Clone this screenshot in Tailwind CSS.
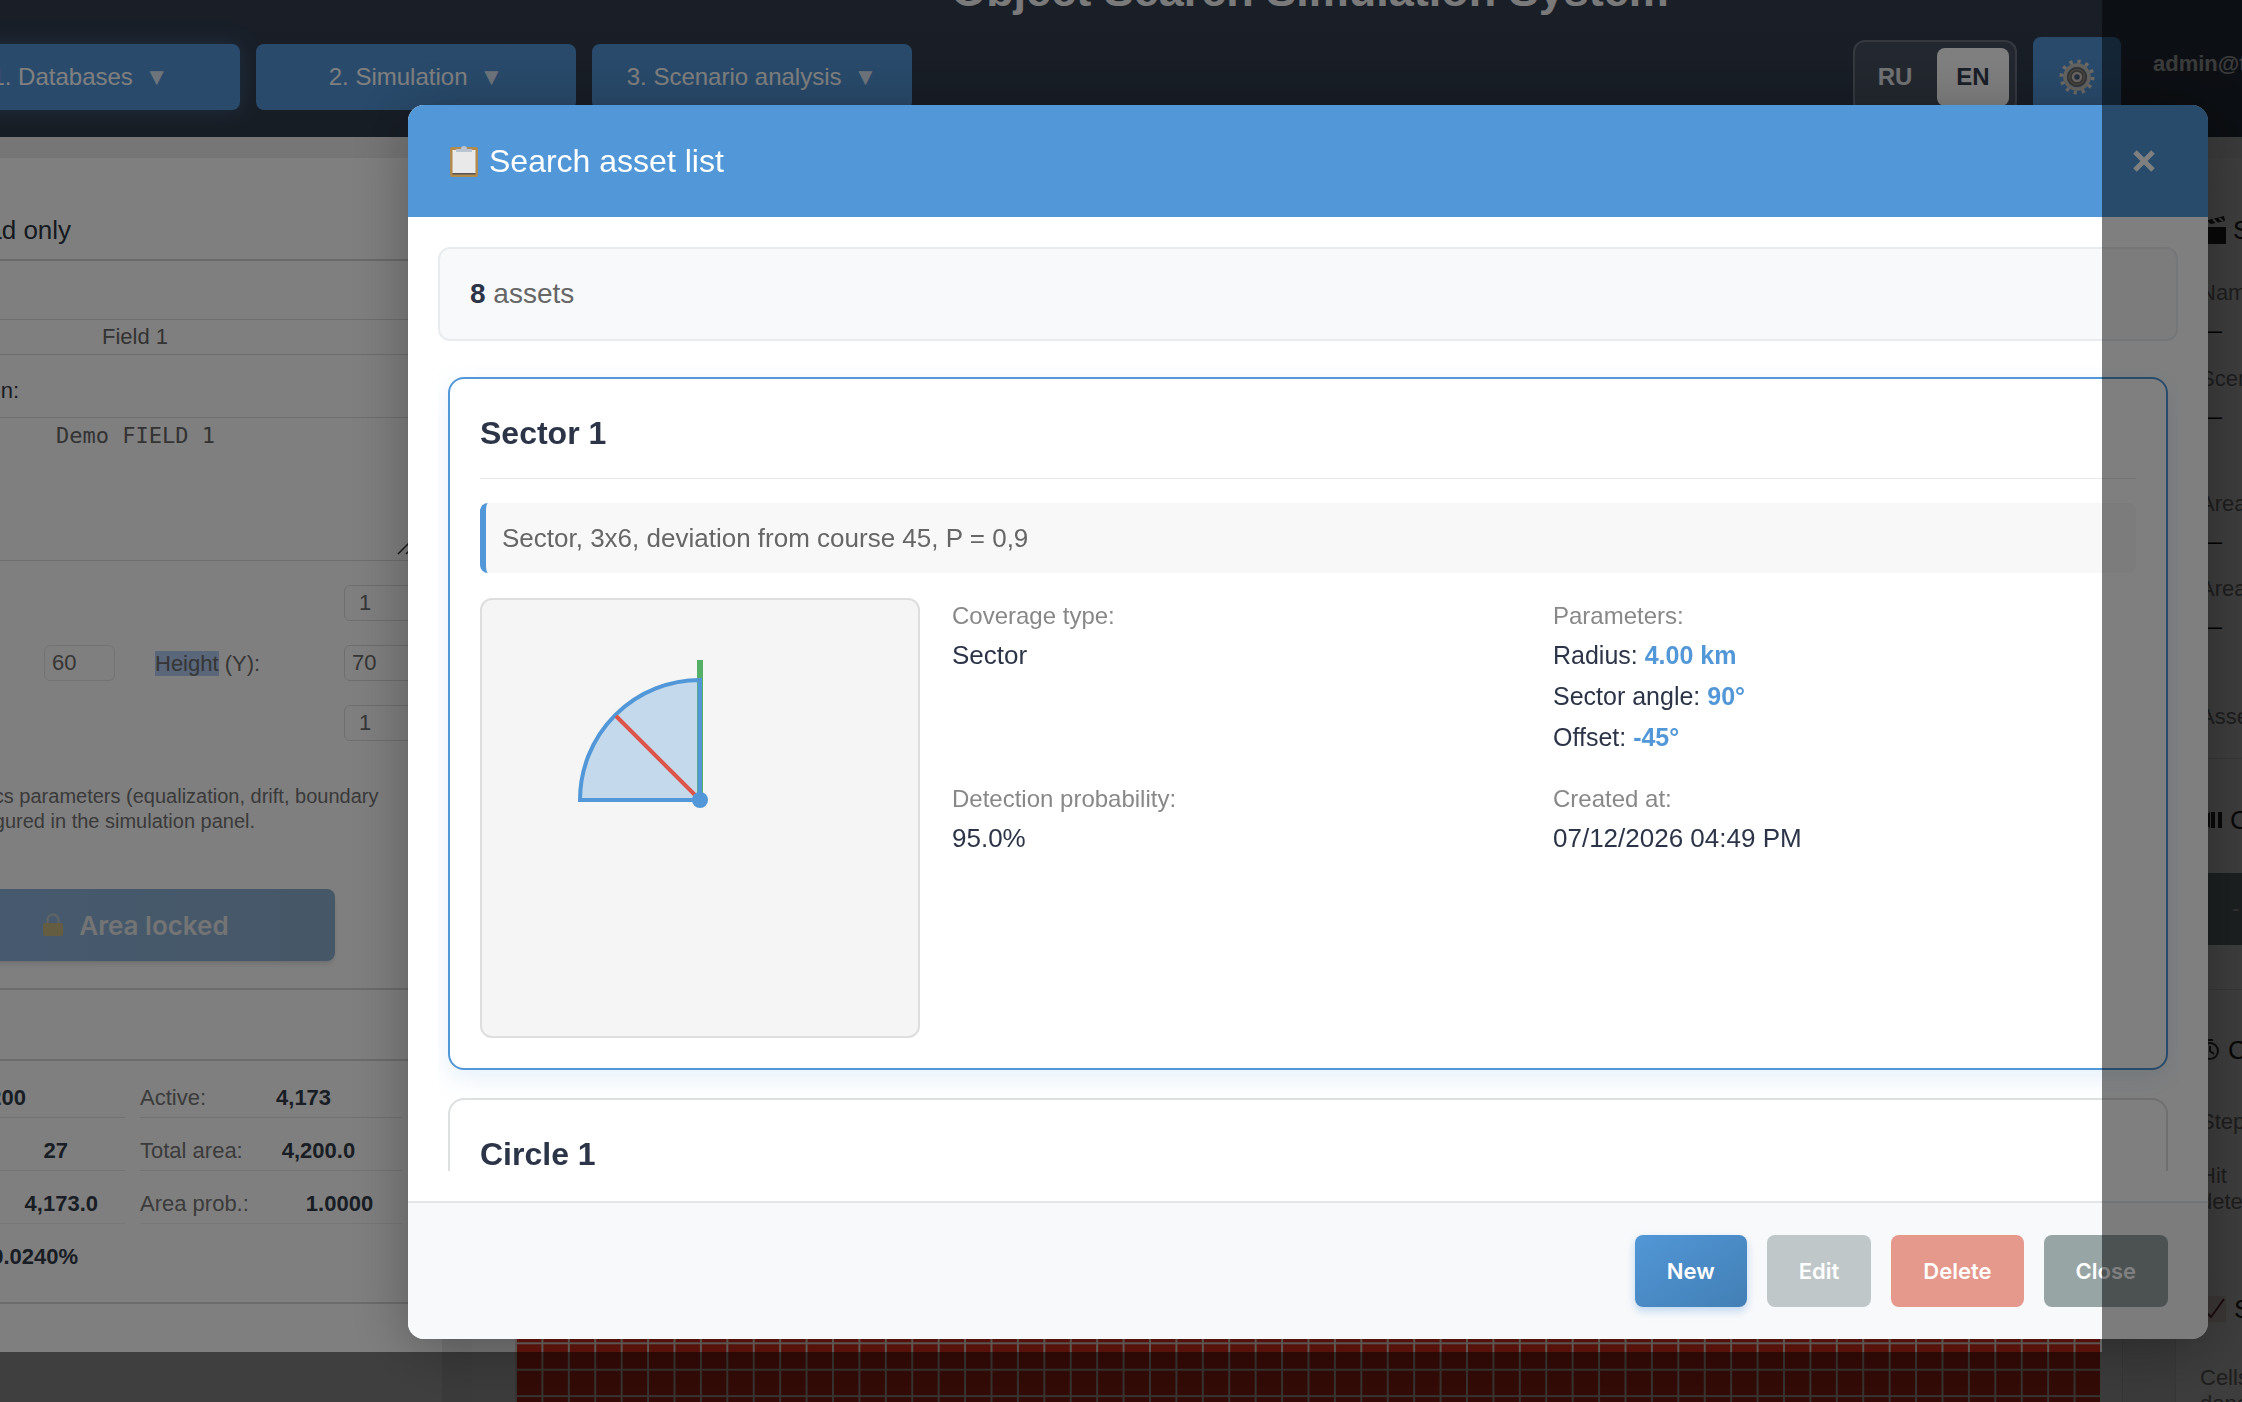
<!DOCTYPE html>
<html lang="en">

<head>
  <meta charset="UTF-8" />
  <meta name="viewport" content="width=device-width, initial-scale=1.0" />
  <title>Object Search Simulation System</title>
  <script src="https://cdn.jsdelivr.net/npm/@tailwindcss/browser@4"></script>
</head>

<body class="h-screen overflow-hidden bg-[#ececec] font-['Liberation_Sans',Arial,sans-serif] text-[#2c3e50]">
  <div class="h-screen overflow-hidden">
    <!-- The page is wider than the window -->
    <div class="-ml-[120px] -mr-[498px]">

      <header class="-mt-[34px] px-10 pb-5 bg-linear-to-b from-[#343e50] to-[#2f3b4a]">
        <h1 class="text-center text-[45px] leading-[50px] font-bold text-[#f4f4f4]">Object Search Simulation System</h1>
        <div class="mt-[21px] h-20 flex items-center justify-between">
          <nav class="flex gap-4 text-2xl text-white">
            <button class="w-80 h-[66px] rounded-lg bg-[#5294d6] shadow-[0_0_20px_rgba(82,148,214,0.4)] flex items-center justify-center gap-3">1. Databases <span class="opacity-80">▼</span></button>
            <button class="w-80 h-[66px] rounded-lg bg-[#5294d6] flex items-center justify-center gap-3">2. Simulation <span class="opacity-80">▼</span></button>
            <button class="w-80 h-[66px] rounded-lg bg-[#5294d6] flex items-center justify-center gap-3">3. Scenario analysis <span class="opacity-80">▼</span></button>
          </nav>
          <div class="w-[847px] flex items-center gap-4">
            <div class="flex rounded-xl border-2 border-white/20 bg-white/10 p-1.5 text-2xl font-bold">
              <button class="w-[76px] h-[58px] pr-2 rounded-lg text-white/85">RU</button>
              <button class="w-[72px] h-[58px] rounded-lg bg-white text-[#343e50]">EN</button>
            </div>
            <button aria-label="Settings" class="w-[88px] h-20 rounded-lg bg-[#5294d6] flex items-center justify-center">
              <svg class="w-9 h-9" viewBox="0 0 36 36" fill="none">
                <circle cx="18" cy="18" r="15.500" stroke="#d9d4cc" stroke-width="4" stroke-dasharray="3.250 4.864" />
                <circle cx="18" cy="18" r="12" stroke="#c9c5be" stroke-width="3.500" />
                <circle cx="18" cy="18" r="10" fill="#6c6a68" />
                <circle cx="18" cy="18" r="7.500" stroke="#8f8c88" stroke-width="1.500" />
                <circle cx="18" cy="18" r="4" fill="#48607c" stroke="#cfcac4" stroke-width="2.500" />
              </svg>
            </button>
            <span class="ml-4 mb-7 text-[22px] font-bold text-white/90">admin@test.local</span>
          </div>
        </div>
      </header>

      <main class="pt-[21px] flex items-start">
        <!-- Area settings -->
        <aside class="w-[562px] h-[1260px] shrink-0 px-[23px] bg-white text-[22px]">
          <h2 class="h-[103px] -mx-[23px] pl-[74px] pb-[13px] flex items-end border-b-2 border-[#d4d4d4] text-[26px] leading-[32px] text-[#2c3440]">Read only</h2>
          <input type="text" aria-label="Name" value="Field 1" class="mt-[58px] w-[510px] h-[36px] pl-[198px] border border-[#dcdcdc] text-[#666] block" />
          <label for="description" class="block mt-5 mb-[11px] leading-[31px] text-[#333c48]">Description:</label>
          <div class="relative w-[510px]">
            <textarea id="description" class="block w-full h-[144px] pl-[152px] pt-1 resize-none border border-[#dcdcdc] font-['DejaVu_Sans_Mono',monospace] text-[22px] leading-[28px] text-[#666]">Demo FIELD 1</textarea>
            <svg class="absolute right-0 bottom-1 w-4 h-4" viewBox="0 0 16 16" stroke="#333" stroke-width="1.500"><path d="M1 13 13 1M9 13 15 7" /></svg>
          </div>
          <div class="mt-6 grid grid-cols-[141px_111px_189px_110px] gap-y-6 items-center text-[#6c6c6c]">
            <input type="text" aria-label="Scale" value="1" class="col-start-4 h-9 px-3.5 rounded-md border border-[#dcdcdc]" />
            <label for="width" class="col-start-1">Width (X):</label>
            <input type="text" id="width" value="60" class="w-[71px] h-9 px-[7px] rounded-md border border-[#e6e6e6]" />
            <label for="height"><span class="bg-[#b4cdf2]">Height</span> (Y):</label>
            <input type="text" id="height" value="70" class="h-9 px-[7px] rounded-md border border-[#dcdcdc]" />
            <input type="text" aria-label="Step" value="1" class="col-start-4 h-9 px-3.5 rounded-md border border-[#dcdcdc]" />
          </div>
          <p class="mt-[43px] pl-[23px] whitespace-nowrap text-xl leading-[25px] text-[#747474]">Dynamics parameters (equalization, drift, boundary<br>all configured in the simulation panel.</p>
          <button class="mt-[55px] ml-[34px] w-[398px] h-[72px] rounded-lg bg-linear-to-r from-[#8cb4e0] to-[#8db0cf] shadow-md flex items-center justify-center gap-4 font-['Inter',sans-serif] text-[26px] font-semibold text-[#e8e8e8]">
            <svg class="w-5 h-6" viewBox="0 0 20 24" fill="none"><path d="M4.500 11V7a5.500 5.500 0 0 1 11 0v4" stroke="#bcc6cc" stroke-width="2.500" /><rect x="0" y="10" width="20" height="13" rx="2" fill="#c8bb83" /></svg>
            Area locked
          </button>
          <div class="mt-[27px] -mx-[23px] h-[73px] border-y-2 border-[#d8d8d8]"></div>

          <!-- Statistics -->
          <div class="grid grid-cols-[222px_262px] gap-x-[15px] text-[22px] text-[#777]">
            <div class="h-[57px] pt-4 flex items-center justify-end border-b border-[#e2e2e2] pr-[99px]"><b class="text-[#323a48]">4,200</b></div>
            <div class="h-[57px] pt-4 flex items-center gap-[70px] border-b border-[#e2e2e2]"><span>Active:</span><b class="text-[#323a48]">4,173</b></div>
            <div class="h-[53px] pt-3 flex items-center justify-end border-b border-[#e8e8e8] pr-[57px]"><b class="text-[#323a48]">27</b></div>
            <div class="h-[53px] pt-3 flex items-center gap-[39px] border-b border-[#e8e8e8]"><span>Total area:</span><b class="text-[#323a48]">4,200.0</b></div>
            <div class="h-[53px] pt-3 flex items-center justify-end border-b border-[#eee] pr-[27px]"><b class="text-[#323a48]">4,173.0</b></div>
            <div class="h-[53px] pt-3 flex items-center gap-[57px] border-b border-[#eee]"><span>Area prob.:</span><b class="text-[#323a48]">1.0000</b></div>
            <div class="h-[53px] pt-3 flex items-center justify-end pr-[47px]"><b class="text-[#323a48]">0.0240%</b></div>
          </div>
          <div class="mt-[25px] -mx-[23px] border-t-2 border-[#d8d8d8]"></div>
        </aside>

        <!-- Search area map -->
        <section class="ml-[30px] pl-[43px] pr-[22px] w-[1651px] shrink-0 border-r border-[#d8d8d8] bg-[#f1f1f1]">
          <svg class="mt-[22px] block w-full" viewBox="0 0 60 70">
            <defs>
              <pattern id="cell" width="1" height="1" patternUnits="userSpaceOnUse">
                <rect width="1" height="1" fill="#ce2b1c" />
                <path d="M0 0H1M0 0V1" stroke="#ddd0c4" stroke-width="0.150" />
              </pattern>
            </defs>
            <rect width="60" height="70" fill="url(#cell)" />
          </svg>
        </section>

        <!-- Scenario panel -->
        <aside class="ml-[52px] w-[560px] shrink-0 h-[1260px] pl-[24px] border-l border-[#ddd] bg-[#f6f6f6] text-[22px] leading-[26px] text-[#777]">
          <h2 class="mt-[54px] flex items-center gap-[7px] text-[26px] leading-[36px] text-[#222]">
            <svg class="w-[26px] h-7" viewBox="0 0 26 28" fill="#222"><path d="M2 11h24v17H2zM0 6 24 0l1 5L2 10z" /><path d="m6 5 4 4M13 3l4 4M19 2l4 3" stroke="#f6f6f6" stroke-width="2" /></svg>
            Scenario
          </h2>
          <p class="mt-8">Name</p>
          <p class="mt-3 text-black">—</p>
          <p class="mt-[22px]">Scenario</p>
          <p class="mt-3 text-black">—</p>
          <p class="mt-[61px]">Area</p>
          <p class="mt-3 text-black">—</p>
          <p class="mt-[21px]">Area type</p>
          <p class="mt-3 text-black">—</p>
          <p class="mt-16">Assets</p>
          <h2 class="mt-7 pt-[43px] flex items-center gap-2 border-t border-[#ddd] text-[26px] leading-[36px] text-[#222]">
            <svg class="w-[22px] h-[18px]" viewBox="0 0 22 18" fill="#222"><path d="M0 9 10 1v16zM11 1h4v16h-4zM18 1h4v16h-4z" /></svg>
            Controls
          </h2>
          <button class="mt-[35px] w-[400px] h-[72px] pl-8 text-left bg-[#738083] text-[#ccc]">- -</button>
          <h2 class="mt-[44px] pt-[42px] flex items-center gap-2 border-t border-[#ddd] text-[26px] leading-[36px] text-[#222]">
            <svg class="w-5 h-6" viewBox="0 0 20 24" fill="none" stroke="#333" stroke-width="2"><circle cx="10" cy="13" r="8" /><path d="M10 8v5l4 3M7 2h6" /></svg>
            Clock
          </h2>
          <p class="mt-[41px]">Steps</p>
          <p class="mt-7">Hit<br>detections</p>
          <h2 class="mt-[76px] flex items-center gap-2 text-[26px] leading-[36px] text-[#222]">
            <svg class="w-[26px] h-[26px]" viewBox="0 0 26 26" fill="none"><rect width="26" height="26" fill="#ead9d9" /><path d="m4 14 7 7L24 3" stroke="#6a3038" stroke-width="2" /></svg>
            Statistics
          </h2>
          <p class="mt-[38px]">Cells<br>done</p>
        </aside>
      </main>
    </div>
  </div>

  <!-- Modal -->
  <div class="fixed inset-0 flex pt-[105px] pr-[34px] pb-[63px] pl-[408px] bg-black/50">
    <div role="dialog" aria-labelledby="modalTitle" class="flex-1 min-w-0 flex flex-col rounded-2xl overflow-hidden bg-white shadow-[0_10px_60px_rgba(0,0,0,0.3)]">
      <div class="h-28 shrink-0 pl-[42px] pr-[53px] flex items-center justify-between bg-[#5297d7] text-white">
        <h2 id="modalTitle" class="flex items-center gap-[11px] text-[32px]">
          <svg class="w-7 h-8" viewBox="0 0 28 32"><rect x="0" y="2" width="28" height="30" rx="2" fill="#b18a4e" /><path d="M2.500 5h23v23h-23z" fill="#e9e9e9" /><path d="M2.500 28h23v1.500h-23z" fill="#555" /><path d="M6 7V4h5a3 3 0 0 1 6 0h5v3z" fill="#b9c4d2" /></svg>
          Search asset list
        </h2>
        <button aria-label="Close dialog">
          <svg class="w-[22px] h-[22px]" viewBox="0 0 22 22" stroke="#fff" stroke-width="5"><path d="M2 2 20 20M20 2 2 20" /></svg>
        </button>
      </div>

      <div class="flex-1 min-h-0 p-[30px] flex flex-col">
        <div class="h-[94px] shrink-0 px-[30px] flex items-center rounded-xl border-2 border-[#e9ecef] bg-[#f8f9fb] text-[28px] text-[#666]">
          <p><strong class="text-[#2c3448]">8</strong> assets</p>
        </div>

        <div class="mt-[26px] p-2.5 flex-1 min-h-0 overflow-hidden">
          <article class="p-[30px] rounded-2xl border-2 border-[#5297d7] shadow-[0_8px_24px_rgba(82,151,215,0.15)]">
            <h3 class="pb-[21px] border-b border-[#e6e8ea] text-[32px] leading-[48px] font-bold text-[#2c3448]">Sector 1</h3>
            <p class="mt-6 h-[70px] pl-4 flex items-center rounded-lg border-l-6 border-[#5297d7] bg-[#f8f8f8] text-[26px] text-[#666]">Sector, 3x6, deviation from course 45, P = 0,9</p>
            <div class="mt-[25px] flex gap-8">
              <svg class="w-[440px] h-[440px] shrink-0 rounded-xl border-2 border-[#dedede] bg-[#f5f5f5]" viewBox="0 0 436 436" fill="none">
                <path d="M218 200V60" stroke="#54b066" stroke-width="6" />
                <path d="M218 200H98A120 120 0 0 1 218 80Z" fill="#5297d7" fill-opacity="0.3" stroke="#5297d7" stroke-width="4" />
                <path d="M218 200 134 116" stroke="#dd5548" stroke-width="4" />
                <circle cx="218" cy="200" r="8" fill="#5297d7" />
              </svg>
              <dl class="flex-1 self-start grid grid-cols-2 gap-x-[18px] gap-y-[23px] text-[26px] leading-[41px] text-[#2c3448]">
                <div>
                  <dt class="mb-0.5 text-2xl leading-[35px] text-[#888]">Coverage type:</dt>
                  <dd>Sector</dd>
                </div>
                <div>
                  <dt class="mb-0.5 text-2xl leading-[35px] text-[#888]">Parameters:</dt>
                  <dd class="text-[25px] leading-[41px]">Radius: <strong class="text-[#5297d7]">4.00 km</strong></dd>
                  <dd class="text-[25px] leading-[41px]">Sector angle: <strong class="text-[#5297d7]">90°</strong></dd>
                  <dd class="text-[25px] leading-[41px]">Offset: <strong class="text-[#5297d7]">-45°</strong></dd>
                </div>
                <div>
                  <dt class="mb-0.5 text-2xl leading-[35px] text-[#888]">Detection probability:</dt>
                  <dd>95.0%</dd>
                </div>
                <div>
                  <dt class="mb-0.5 text-2xl leading-[35px] text-[#888]">Created at:</dt>
                  <dd>07/12/2026 04:49 PM</dd>
                </div>
              </dl>
            </div>
          </article>

          <article class="mt-7 p-[30px] rounded-2xl border-2 border-[#dedfe1] bg-white">
            <h3 class="pb-[21px] border-b border-[#e6e8ea] text-[32px] leading-[48px] font-bold text-[#2c3448]">Circle 1</h3>
          </article>
        </div>
      </div>

      <div class="h-[138px] shrink-0 pr-10 flex items-center justify-end gap-5 border-t-2 border-[#e3e6e9] bg-[#f8f9fb] font-['Inter',sans-serif] text-[22px] font-semibold text-white">
        <button class="h-[72px] px-8 rounded-lg bg-linear-to-br from-[#5297d7] to-[#427fb5] shadow-[0_4px_8px_rgba(82,151,215,0.35)]">New</button>
        <button class="h-[72px] px-8 rounded-lg bg-[#bfc7c8]">Edit</button>
        <button class="h-[72px] px-8 rounded-lg bg-[#e5988c]">Delete</button>
        <button class="h-[72px] px-8 rounded-lg bg-[#98a5a5]">Close</button>
      </div>
    </div>
  </div>

  <!-- Spotlight: everything outside this box is dimmed -->
  <div class="fixed top-0 left-0 right-[140px] bottom-[50px] pointer-events-none shadow-[0_0_0_9999px_rgba(0,0,0,0.5)]"></div>
</body>

</html>
